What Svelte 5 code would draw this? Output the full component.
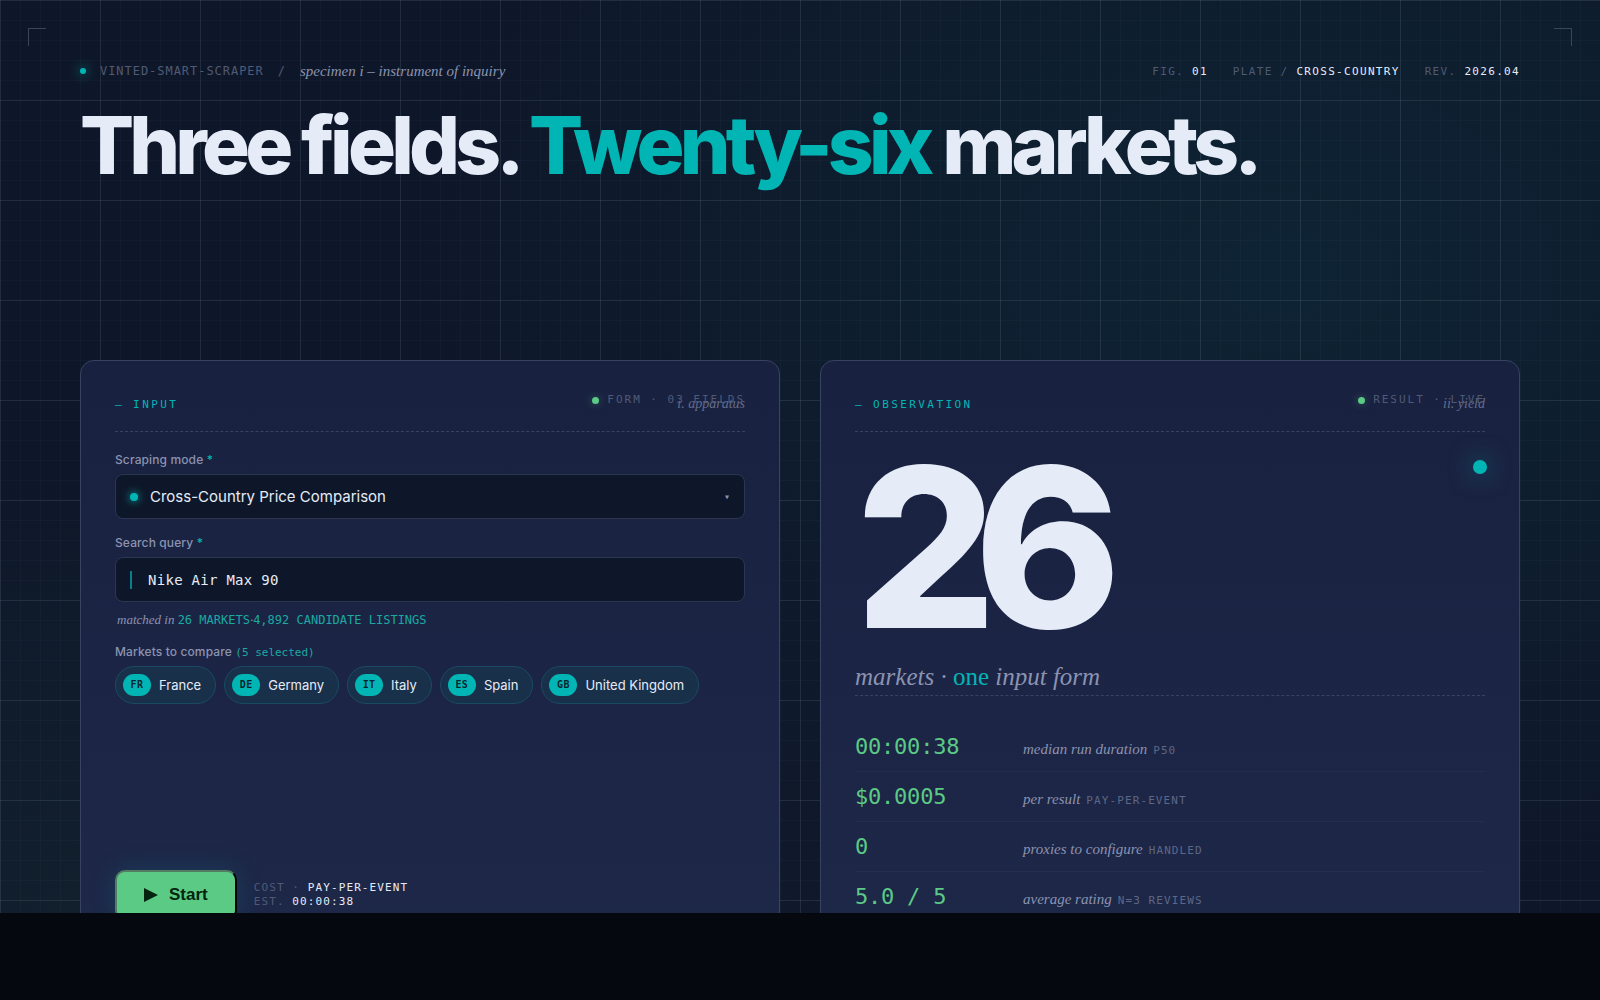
<script lang="ts">
  // Plate 01: the input form on the left, the figures it yields on the right.

  type Market = { code: string; name: string };
  type Stat = { value: string; label: string; tag: string };

  const modes = ['Cross-Country Price Comparison'];

  const markets: Market[] = [
    { code: 'FR', name: 'France' },
    { code: 'DE', name: 'Germany' },
    { code: 'IT', name: 'Italy' },
    { code: 'ES', name: 'Spain' },
    { code: 'GB', name: 'United Kingdom' },
  ];

  const stats: Stat[] = [
    { value: '00:00:38', label: 'median run duration', tag: 'P50' },
    { value: '$0.0005', label: 'per result', tag: 'PAY-PER-EVENT' },
    { value: '0', label: 'proxies to configure', tag: 'HANDLED' },
    { value: '5.0 / 5', label: 'average rating', tag: 'N=3 REVIEWS' },
  ];

  let mode = $state(modes[0]);
  let query = $state('Nike Air Max 90');
</script>

<div class="page">
  <div class="stage">
    <span class="corner left"></span>
    <span class="corner right"></span>

    <header class="topbar">
      <div class="brand">
        <span class="pip"></span>
        <span>VINTED-SMART-SCRAPER</span>
        <span>/</span>
        <em>specimen i – instrument of inquiry</em>
      </div>
      <div class="meta">
        <span>FIG. <b>01</b></span>
        <span>PLATE / <b>CROSS-COUNTRY</b></span>
        <span>REV. <b>2026.04</b></span>
      </div>
    </header>

    <h1>Three fields. <span>Twenty-six</span> markets.</h1>

    <main class="cards">
      <section class="card">
        <div class="status"><i></i>FORM · 03 FIELDS</div>
        <div class="card-head">
          <h2>— INPUT</h2>
          <em>i. apparatus</em>
        </div>

        <form onsubmit={(e) => e.preventDefault()}>
          <label class="label" for="mode">Scraping mode <b>*</b></label>
          <div class="control">
            <span class="pip"></span>
            <select id="mode" bind:value={mode}>
              {#each modes as m (m)}
                <option value={m}>{m}</option>
              {/each}
            </select>
            <span class="caret">▾</span>
          </div>

          <label class="label" for="query">Search query <b>*</b></label>
          <div class="control query">
            <span class="bar"></span>
            <input id="query" type="text" bind:value={query} />
          </div>
          <p class="hint"><em>matched in</em> <b>26 MARKETS</b><em>·</em><b>4,892 CANDIDATE LISTINGS</b></p>

          <div class="label">Markets to compare <small>({markets.length} selected)</small></div>
          <ul class="chips">
            {#each markets as m (m.code)}
              <li><span class="code">{m.code}</span>{m.name}</li>
            {/each}
          </ul>

          <div class="run">
            <button type="submit">
              <svg viewBox="0 0 14 14" width="14" height="14" aria-hidden="true">
                <path d="M0 0 L14 7 L0 14 Z" fill="currentColor" />
              </svg>
              Start
            </button>
            <div class="cost">
              <div>COST · <b>PAY-PER-EVENT</b></div>
              <div>EST. <b>00:00:38</b></div>
            </div>
          </div>
        </form>
      </section>

      <section class="card">
        <div class="status"><i></i>RESULT · LIVE</div>
        <div class="card-head">
          <h2>— OBSERVATION</h2>
          <em>ii. yield</em>
        </div>
        <span class="beacon"></span>

        <div class="figure">26</div>
        <p class="caption">markets · <span>one</span> input form</p>

        <dl class="stats">
          {#each stats as s (s.label)}
            <div class="row">
              <dt>{s.value}</dt>
              <dd><em>{s.label}</em><span>{s.tag}</span></dd>
            </div>
          {/each}
        </dl>
      </section>
    </main>
  </div>
</div>

<style>
  :global(body) {
    background: #05080f;
  }

  .page {
    --mono: 'DejaVu Sans Mono', 'Liberation Mono', monospace;
    --serif: 'Liberation Serif', serif;
    --sans: Inter, 'Liberation Sans', sans-serif;
    --teal: #02b5b5;
    --green: #5bca85;
    --fg: #e6ecf7;
    --dim: #8b93b0;
    --faint: #505a75;
    --line: #384261;

    display: flex;
    flex-direction: column;
    height: 100vh;
    padding-bottom: 87px;
    box-sizing: border-box;
    color: var(--fg);
    font-family: var(--sans);
  }
  .page * {
    box-sizing: border-box;
  }

  /* Graph paper: 100px major and 20px minor rules over two soft glows. */
  .stage {
    position: relative;
    flex: 1;
    min-height: 0;
    overflow: hidden;
    padding: 60px 80px 0;
    background:
      linear-gradient(rgba(190, 220, 230, 0.09) 1px, transparent 1px) 0 0 / 100px 100px,
      linear-gradient(90deg, rgba(190, 220, 230, 0.09) 1px, transparent 1px) 0 0 / 100px 100px,
      linear-gradient(rgba(150, 190, 210, 0.03) 1px, transparent 1px) 0 0 / 20px 20px,
      linear-gradient(90deg, rgba(150, 190, 210, 0.03) 1px, transparent 1px) 0 0 / 20px 20px,
      radial-gradient(ellipse 55% 70% at 80% 30%, rgba(9, 177, 177, 0.08), transparent),
      radial-gradient(ellipse 50% 50% at 10% 100%, rgba(91, 202, 133, 0.05), transparent),
      #0e1729;
  }

  .corner {
    position: absolute;
    top: 28px;
    width: 18px;
    height: 18px;
    border-top: 1px solid #3a4657;
  }
  .corner.left {
    left: 28px;
    border-left: 1px solid #3a4657;
  }
  .corner.right {
    right: 28px;
    border-right: 1px solid #3a4657;
  }

  .topbar {
    display: flex;
    justify-content: space-between;
    align-items: center;
    height: 22px;
  }
  .brand {
    display: flex;
    align-items: center;
    gap: 14px;
    font: 12px var(--mono);
    letter-spacing: 0.08em;
    color: var(--faint);
  }
  .brand em {
    font: italic 15px var(--serif);
    letter-spacing: 0;
    color: var(--dim);
  }
  .pip {
    flex: none;
    width: 6px;
    height: 6px;
    border-radius: 50%;
    background: var(--teal);
    box-shadow: 0 0 12px var(--teal);
  }
  .meta {
    display: flex;
    gap: 25px;
    font: 11px var(--mono);
    letter-spacing: 0.12em;
    color: var(--faint);
  }
  .meta b,
  .cost b {
    font-weight: 400;
    color: var(--fg);
  }

  h1 {
    margin: 15px 0 0;
    height: 263px;
    font: 800 80px/96px var(--sans);
    letter-spacing: -0.06em;
    white-space: nowrap;
  }
  h1 span {
    color: var(--teal);
  }

  .cards {
    display: grid;
    grid-template-columns: 1fr 1fr;
    gap: 40px;
  }
  .card {
    position: relative;
    height: 640px;
    padding: 34px;
    border: 1px solid var(--line);
    border-radius: 14px;
    background: linear-gradient(#192140, #1e2849);
  }
  .status {
    position: absolute;
    top: 31px;
    right: 34px;
    display: flex;
    align-items: center;
    gap: 8px;
    font: 11px/16px var(--mono);
    letter-spacing: 0.18em;
    color: var(--faint);
  }
  .status i {
    width: 7px;
    height: 7px;
    border-radius: 50%;
    background: var(--green);
    box-shadow: 0 0 8px rgba(91, 202, 133, 0.4);
  }
  .card-head {
    display: flex;
    justify-content: space-between;
    align-items: center;
    height: 37px;
    padding-bottom: 18px;
    border-bottom: 1px dashed var(--line);
  }
  h2 {
    margin: 0;
    font: 11px var(--mono);
    letter-spacing: 0.22em;
    color: var(--teal);
  }
  .card-head em {
    font: italic 14px var(--serif);
    color: #626c8b;
  }

  form {
    display: flex;
    flex-direction: column;
    padding-top: 20px;
  }
  .label {
    margin-bottom: 6px;
    font-size: 12px;
    line-height: 16px;
    font-weight: 500;
    letter-spacing: 0.01em;
    color: var(--dim);
  }
  .label b {
    font-weight: 500;
    color: var(--teal);
  }
  .label small {
    font: 11px var(--mono);
    letter-spacing: 0;
    color: #1aa9a3;
  }
  .control {
    display: flex;
    align-items: center;
    height: 45px;
    margin-bottom: 16px;
    padding: 0 14px;
    border: 1px solid #2c3650;
    border-radius: 8px;
    background: #0e1729;
  }
  .control .pip {
    width: 8px;
    height: 8px;
    box-shadow: 0 0 8px var(--teal);
  }
  select,
  input {
    flex: 1;
    min-width: 0;
    padding: 0;
    border: 0;
    outline: 0;
    appearance: none;
    background: none;
    color: var(--fg);
  }
  select {
    margin-left: 12px;
    font: 15px var(--sans);
  }
  .caret {
    font: 10px var(--mono);
    color: var(--dim);
  }
  .bar {
    width: 2px;
    height: 18px;
    background: #0a7f88;
  }
  input {
    margin-left: 16px;
    font: 14px var(--mono);
    letter-spacing: 0.02em;
  }
  .control.query {
    margin-bottom: 8px;
  }
  .hint {
    margin: 0 0 14px 2px;
    font: 12px/20px var(--mono);
    color: #1aa9a3;
  }
  .hint b {
    font-weight: 400;
  }
  .hint em {
    font: italic 13px/20px var(--serif);
    color: var(--dim);
  }
  .hint em:first-child {
    margin-right: -4px;
  }
  .chips {
    display: flex;
    gap: 8px;
    margin: 0;
    padding: 0;
    list-style: none;
  }
  .chips li {
    display: flex;
    align-items: center;
    gap: 8px;
    height: 38px;
    padding: 0 14px 0 7px;
    border: 1px solid #1a4a62;
    border-radius: 19px;
    background: #19304a;
    font-size: 13px;
  }
  .code {
    width: 28px;
    height: 22px;
    border-radius: 11px;
    background: var(--teal);
    color: #07252f;
    font: 700 10px/22px var(--mono);
    letter-spacing: 0.04em;
    text-align: center;
  }

  .run {
    display: flex;
    align-items: center;
    gap: 17px;
    margin-top: 166px;
  }
  button {
    display: flex;
    align-items: center;
    gap: 11px;
    height: 50px;
    padding: 0 27px;
    border: 2px outset #333;
    border-color: #537c63 #0a1a18 #0a1a18 #537c63;
    border-radius: 10px;
    background: var(--green);
    box-shadow: 0 0 26px rgba(20, 160, 170, 0.2);
    color: #04240f;
    font: 700 17px 'Liberation Sans', sans-serif;
  }
  .cost {
    font: 11px/14px var(--mono);
    letter-spacing: 0.1em;
    color: var(--faint);
  }

  .beacon {
    position: absolute;
    top: 99px;
    right: 32px;
    width: 14px;
    height: 14px;
    border-radius: 50%;
    background: var(--teal);
    box-shadow: 0 0 24px rgba(2, 181, 181, 0.6);
  }
  .figure {
    margin-top: 12px;
    font: 800 222px/208px var(--sans);
    letter-spacing: -0.1em;
  }
  .caption {
    margin: 0;
    height: 44px;
    border-bottom: 1px dashed var(--line);
    font: italic 25px/50px var(--serif);
    color: var(--dim);
  }
  .caption span {
    font-style: normal;
    color: var(--teal);
  }

  .stats {
    margin: 26px 0 0;
  }
  .row {
    display: grid;
    grid-template-columns: 150px 1fr;
    gap: 18px;
    align-items: baseline;
    height: 50px;
    border-bottom: 1px solid #232d4f;
  }
  .row dt {
    font: 22px/50px var(--mono);
    letter-spacing: -0.01em;
    color: var(--green);
  }
  .row dd {
    margin: 0;
    font: 11px/48px var(--mono);
    letter-spacing: 0.1em;
    color: #5d6786;
  }
  .row em {
    margin-right: 6px;
    font: italic 15px var(--serif);
    letter-spacing: 0;
    color: var(--dim);
  }
</style>
